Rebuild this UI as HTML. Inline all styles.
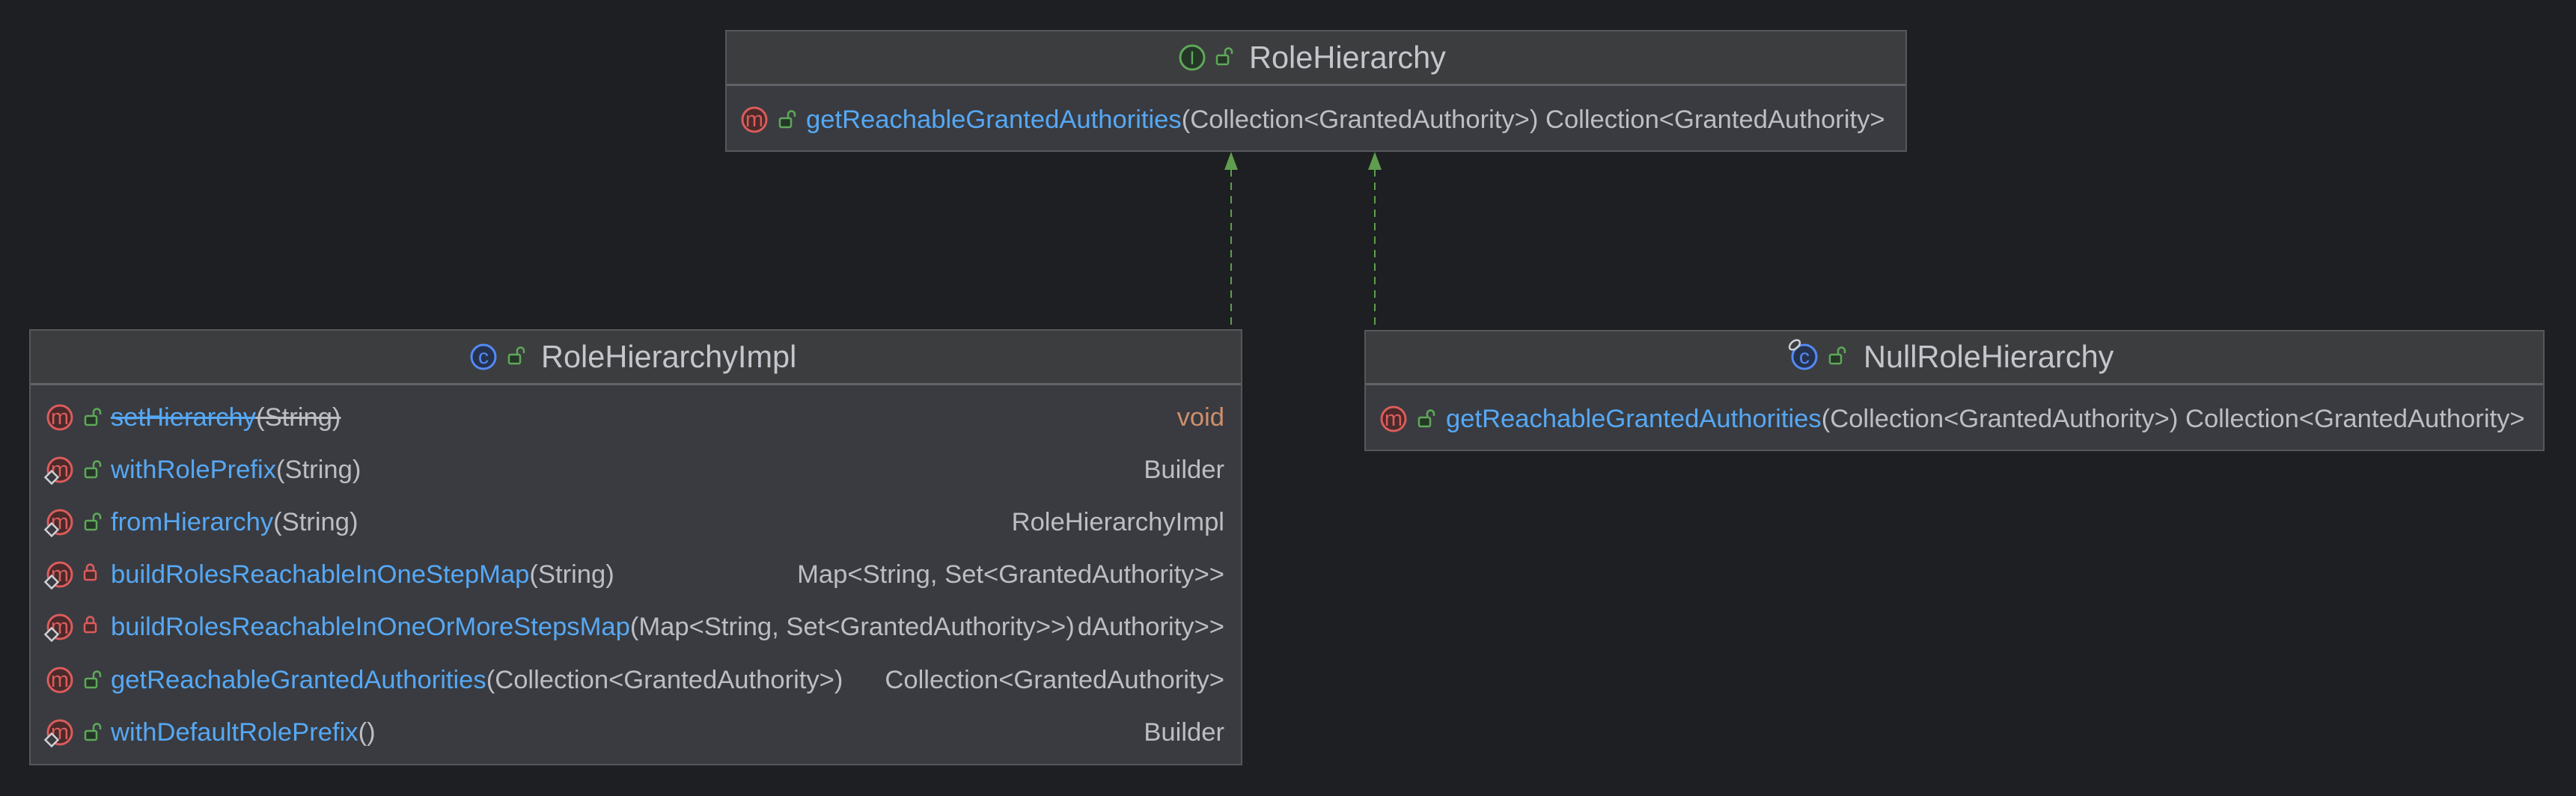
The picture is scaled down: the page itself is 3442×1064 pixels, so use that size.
<!DOCTYPE html>
<html><head><meta charset="utf-8">
<style>
*{margin:0;padding:0;box-sizing:border-box}
body{width:3442px;height:1064px;background:#1e1f22;position:relative;overflow:hidden;font-family:"Liberation Sans",sans-serif}
.box{position:absolute;border:2px solid #55575b;background:#393b40}
.hdr{position:absolute;left:0;right:0;top:0;background:#3c3d3e;border-bottom:3px solid #616366}
.t{position:absolute;white-space:nowrap;font-size:34.6px;line-height:40px;height:40px;color:#bcbec4}
.title{font-size:41.5px;line-height:50px;height:50px;color:#c4c6cc}
.b{color:#56a8f5}
.r{text-align:right}
svg{position:absolute;overflow:visible}
</style></head><body>

<svg width="3442" height="1064" style="left:0;top:0">
<g stroke="#5f9e4e" stroke-width="2" stroke-dasharray="10,8" fill="none">
<line x1="1645" y1="226" x2="1645" y2="441"/>
<line x1="1837" y1="226" x2="1837" y2="443"/>
</g>
<polygon points="1645,203 1636,227 1654,227" fill="#5f9e4e"/>
<polygon points="1837,203 1828,227 1846,227" fill="#5f9e4e"/>
</svg>

<div class="box" style="left:969px;top:40px;width:1579px;height:163px">
<div class="hdr" style="height:73px"></div>
</div>
<div class="box" style="left:39px;top:440px;width:1621px;height:583px">
<div class="hdr" style="height:73px"></div>
</div>
<div class="box" style="left:1823px;top:441px;width:1577px;height:162px">
<div class="hdr" style="height:72px"></div>
</div>

<svg width="3442" height="1064" style="left:0;top:0">
<defs>
<g id="m"><circle r="16" fill="#4a2a2a" stroke="#db5c5c" stroke-width="3"/><text x="0" y="9" font-family="Liberation Sans" font-size="29" fill="#db5c5c" text-anchor="middle">m</text></g>
<g id="lo"><rect x="0" y="-6" width="15" height="12" rx="2" fill="#253627" stroke="#5fa85a" stroke-width="2.5"/><path d="M11,-6 V-11 A4.5,4.5 0 0 1 20,-11 V-8" fill="none" stroke="#5fa85a" stroke-width="2.5"/></g>
<g id="lc"><rect x="0" y="-5" width="15" height="12" rx="2" fill="#4a2a2a" stroke="#db5c5c" stroke-width="2.5"/><path d="M3,-5 V-9 A4.5,4.5 0 0 1 12,-9 V-5" fill="none" stroke="#db5c5c" stroke-width="2.5"/></g>
<g id="st"><rect x="-6" y="-6" width="12" height="12" transform="rotate(45)" fill="#393b40" stroke="#ced0d6" stroke-width="2.5"/></g>
<g id="c"><circle r="16" fill="#25324d" stroke="#548af7" stroke-width="3"/><text x="0" y="9" font-family="Liberation Sans" font-size="28" fill="#548af7" text-anchor="middle">c</text></g>
</defs>
<g transform="translate(1593,77)"><circle r="16" fill="#253627" stroke="#5fa85a" stroke-width="3"/><text x="0" y="9" font-family="Liberation Sans" font-size="25" fill="#5fa85a" text-anchor="middle">I</text></g>
<use href="#lo" x="1626" y="80"/>
<use href="#m" x="1008" y="160"/>
<use href="#lo" x="1042" y="164"/>
<use href="#c" x="646" y="477"/>
<use href="#lo" x="680" y="480"/>
<use href="#m" x="80" y="558"/><use href="#lo" x="114" y="562"/>
<use href="#m" x="80" y="628"/><use href="#lo" x="114" y="632"/><use href="#st" x="69" y="638"/>
<use href="#m" x="80" y="698"/><use href="#lo" x="114" y="702"/><use href="#st" x="69" y="708"/>
<use href="#m" x="80" y="768"/><use href="#lc" x="113" y="768"/><use href="#st" x="69" y="778"/>
<use href="#m" x="80" y="838"/><use href="#lc" x="113" y="838"/><use href="#st" x="69" y="848"/>
<use href="#m" x="80" y="909"/><use href="#lo" x="114" y="913"/>
<use href="#m" x="80" y="979"/><use href="#lo" x="114" y="983"/><use href="#st" x="69" y="989"/>
<use href="#c" x="2411" y="477"/>
<ellipse cx="2398" cy="461" rx="8" ry="5" transform="rotate(-40 2398 461)" fill="none" stroke="#ced0d6" stroke-width="2.5"/>
<use href="#lo" x="2445" y="480"/>
<use href="#m" x="1862" y="560"/>
<use href="#lo" x="1896" y="564"/>
</svg>

<div class="t title" style="left:1669px;top:52px">RoleHierarchy</div>
<div class="t" style="left:1077px;top:140px"><span class="b">getReachableGrantedAuthorities</span>(Collection&lt;GrantedAuthority&gt;) Collection&lt;GrantedAuthority&gt;</div>

<div class="t title" style="left:723px;top:452px">RoleHierarchyImpl</div>
<div class="t" style="left:148px;top:538px"><span class="b" style="text-decoration:line-through">setHierarchy</span><span style="text-decoration:line-through">(String)</span></div>
<div class="t r" style="right:1806px;top:538px;color:#cf8e6d">void</div>
<div class="t" style="left:148px;top:608px"><span class="b">withRolePrefix</span>(String)</div>
<div class="t r" style="right:1806px;top:608px">Builder</div>
<div class="t" style="left:148px;top:678px"><span class="b">fromHierarchy</span>(String)</div>
<div class="t r" style="right:1806px;top:678px">RoleHierarchyImpl</div>
<div class="t" style="left:148px;top:748px"><span class="b">buildRolesReachableInOneStepMap</span>(String)</div>
<div class="t r" style="right:1806px;top:748px">Map&lt;String, Set&lt;GrantedAuthority&gt;&gt;</div>
<div class="t" style="left:148px;top:818px"><span class="b">buildRolesReachableInOneOrMoreStepsMap</span>(Map&lt;String, Set&lt;GrantedAuthority&gt;&gt;)</div>
<div class="t" style="left:1441px;width:195px;top:818px;overflow:hidden;display:flex;justify-content:flex-end">Map&lt;String, Set&lt;GrantedAuthority&gt;&gt;</div>
<div class="t" style="left:148px;top:889px"><span class="b">getReachableGrantedAuthorities</span>(Collection&lt;GrantedAuthority&gt;)</div>
<div class="t r" style="right:1806px;top:889px">Collection&lt;GrantedAuthority&gt;</div>
<div class="t" style="left:148px;top:959px"><span class="b">withDefaultRolePrefix</span>()</div>
<div class="t r" style="right:1806px;top:959px">Builder</div>

<div class="t title" style="left:2490px;top:452px">NullRoleHierarchy</div>
<div class="t" style="left:1932px;top:540px"><span class="b">getReachableGrantedAuthorities</span>(Collection&lt;GrantedAuthority&gt;) Collection&lt;GrantedAuthority&gt;</div>

</body></html>
